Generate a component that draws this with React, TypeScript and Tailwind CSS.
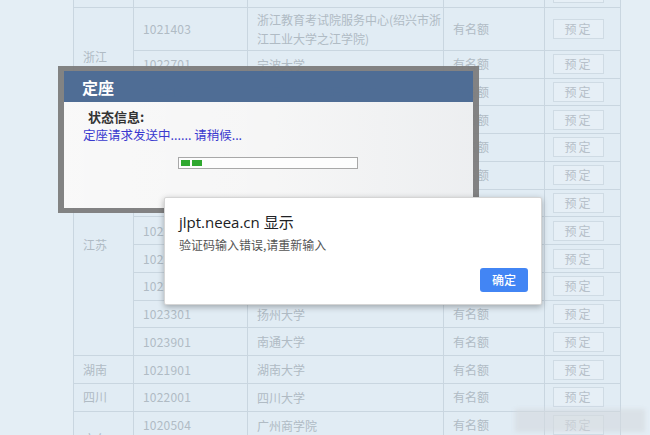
import React from "react";

type Row = {
  prov?: { name: string; span: number };
  code: string;
  name: string;
  tall?: boolean;
};

const rows: Row[] = [
  { prov: { name: "", span: 1 }, code: "", name: "" },
  {
    prov: { name: "浙江", span: 3 },
    code: "1021403",
    name: "浙江教育考试院服务中心(绍兴市浙\n江工业大学之江学院)",
    tall: true,
  },
  { code: "1022701", name: "宁波大学" },
  { code: "1024101", name: "浙江同济科技职业学院" },
  { prov: { name: "", span: 1 }, code: "1021501", name: "杭州东方中日文化语言培训中心" },
  { prov: { name: "江苏", span: 8 }, code: "1022301", name: "苏州大学" },
  { code: "1021701", name: "苏州科技大学" },
  { code: "1022201", name: "南京大学" },
  { code: "1022401", name: "南京师范大学" },
  { code: "1022501", name: "江南大学" },
  { code: "1022801", name: "南京农业大学" },
  { code: "1023301", name: "扬州大学" },
  { code: "1023901", name: "南通大学" },
  { prov: { name: "湖南", span: 1 }, code: "1021901", name: "湖南大学" },
  { prov: { name: "四川", span: 1 }, code: "1022001", name: "四川大学" },
  { prov: { name: "广东", span: 2 }, code: "1020504", name: "广州商学院" },
  { code: "1020601", name: "中山大学" },
];

const cjk = "font-['Microsoft_YaHei','Noto_Sans_CJK_SC',sans-serif]";

function SeatTable() {
  return (
    <table className={`-mt-[21px] ml-[73px] w-[547px] table-fixed border-collapse ${cjk} text-[#b0bbc4]`}>
      <colgroup>
        <col className="w-[60px]" />
        <col className="w-[114px]" />
        <col className="w-[196px]" />
        <col className="w-[101px]" />
        <col className="w-[76px]" />
      </colgroup>
      <tbody>
        {rows.map((r, i) => (
          <tr key={i} className={r.tall ? "h-[43px]" : "h-[27.77px]"}>
            {r.prov ? (
              <td
                rowSpan={r.prov.span}
                className="border border-[#c9d6e0] bg-[#e1ecf4] pl-[9px] text-[12px]"
              >
                {r.prov.name}
              </td>
            ) : null}
            <td className="border border-[#c9d6e0] bg-[#e1ecf4] pl-[9px] text-[12px] tracking-[0.2px]">
              {r.code}
            </td>
            <td className="whitespace-pre border border-[#c9d6e0] bg-[#e1ecf4] pl-[9px] pr-0 text-[12px] leading-[19px]">
              {r.name}
            </td>
            <td className="border border-[#c9d6e0] bg-[#e1ecf4] pl-[9px] text-[12px]">
              有名额
            </td>
            <td className="border border-[#c9d6e0] bg-[#e1ecf4] pl-[8px]">
              <div className="flex h-[20px] w-[51px] items-center justify-center border border-[#cfdbe4] bg-[#e6eff6] text-[12px] tracking-[2px] text-[#b6c0c9]">
                预定
              </div>
            </td>
          </tr>
        ))}
      </tbody>
    </table>
  );
}

function SeatDialog() {
  return (
    <div className="absolute left-[58px] top-[66px] h-[147px] w-[421px] bg-[#7c7c7c]/95 pl-[6px] pt-[5px]">
      <div className="flex h-[137px] w-[409px] flex-col">
        <div className="flex h-[31px] items-center bg-[#4c6c96]/95 pl-[18px]">
          <span className={`${cjk} text-[16px] font-bold text-white`}>定座</span>
        </div>
        <div className={`flex-1 bg-gradient-to-r from-white/95 via-white/93 to-[#f6f8fa]/92 ${cjk}`}>
          <div className="pl-[24px] pt-[6px] text-[13px] font-bold leading-[18px] text-[#333]">
            状态信息:
          </div>
          <div className="pl-[19px] text-[12.5px] leading-[18px] text-[#3a3acf]">
            定座请求发送中...... 请稍候...
          </div>
          <div className="ml-[114px] mt-[13px] flex h-[12px] w-[180px] items-center gap-[2px] border border-[#a8a8a8] bg-white/80 pl-[2px]">
            <span className="h-[6px] w-[9px] bg-[#2fa82f]" />
            <span className="h-[6px] w-[10px] bg-[#2fa82f]" />
          </div>
        </div>
      </div>
    </div>
  );
}

function AlertBox() {
  return (
    <div className="absolute left-[164px] top-[197px] flex h-[108px] w-[378px] flex-col rounded-[2px] border border-[#d5d5d5] bg-white shadow-[0_2px_6px_rgba(0,0,0,0.3)]">
      <div className="pl-[14px] pt-[15px] font-['Open_Sans','Noto_Sans_CJK_SC',sans-serif] text-[15px] leading-[18px] text-[#202124]">
        jlpt.neea.cn 显示
      </div>
      <div className={`pl-[14px] pt-[6px] ${cjk} text-[12px] leading-[16px] text-[#555]`}>
        验证码输入错误,请重新输入
      </div>
      <div className="mt-auto flex justify-end pb-[12px] pr-[13px]">
        <button
          type="button"
          className={`h-[24px] w-[48px] rounded-[3px] bg-[#4285f4] ${cjk} text-[12px] font-medium text-white`}
        >
          确定
        </button>
      </div>
    </div>
  );
}

export default function App() {
  return (
    <div className="relative h-[435px] w-[650px] overflow-hidden bg-[#e4eef5]">
      <SeatTable />
      <SeatDialog />
      <AlertBox />
      <div className="absolute left-[515px] top-[409px] h-[23px] w-[130px] bg-[#d3d9de]/60 blur-[2px]" />
    </div>
  );
}
